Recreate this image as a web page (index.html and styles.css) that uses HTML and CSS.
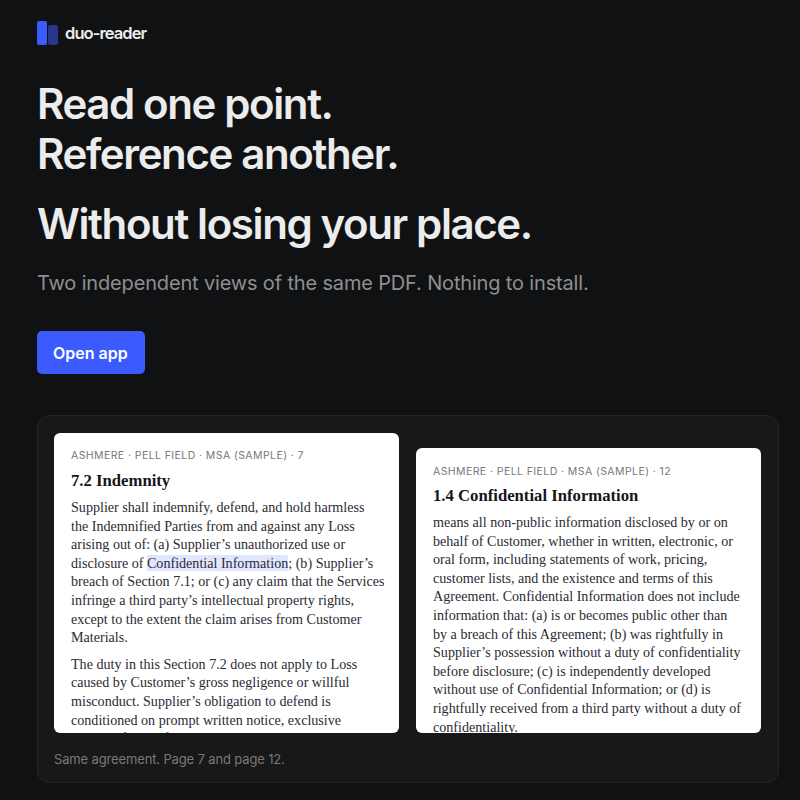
FILE: index.html
```html
<!DOCTYPE html>
<html lang="en">
<head>
<meta charset="utf-8">
<title>duo-reader</title>
<link rel="stylesheet" href="styles.css">
</head>
<body>
<main class="page">
  <header class="brand">
    <svg class="mark" width="22" height="24" viewBox="0 0 22 24" aria-hidden="true">
      <rect x="0" y="0" width="10" height="24" rx="2" fill="#3b5bff"/>
      <rect x="11" y="4" width="10" height="20" rx="2" fill="#27358a"/>
    </svg>
    <span class="brand-name">duo-reader</span>
  </header>
  <h1 class="headline">Read one point.<br>Reference another.</h1>
  <h2 class="subhead">Without losing your place.</h2>
  <p class="lede">Two independent views of the same PDF. Nothing to install.</p>
  <a class="cta" href="#">Open app</a>
  <section class="panel">
    <div class="cards">
      <article class="card">
        <div class="eyebrow">ASHMERE · PELL FIELD · MSA (SAMPLE) · 7</div>
        <h3 class="title">7.2 Indemnity</h3>
        <p class="body">Supplier shall indemnify, defend, and hold harmless<br>the Indemnified Parties from and against any Loss<br>arising out of: (a) Supplier’s unauthorized use or<br>disclosure of <mark class="hit">Confidential Information</mark>; (b) Supplier’s<br>breach of Section 7.1; or (c) any claim that the Services<br>infringe a third party’s intellectual property rights,<br>except to the extent the claim arises from Customer<br>Materials.</p>
        <p class="body">The duty in this Section 7.2 does not apply to Loss<br>caused by Customer’s gross negligence or willful<br>misconduct. Supplier’s obligation to defend is<br>conditioned on prompt written notice, exclusive<br>control of the defense, and reasonable</p>
      </article>
      <article class="card card-low">
        <div class="eyebrow">ASHMERE · PELL FIELD · MSA (SAMPLE) · 12</div>
        <h3 class="title">1.4 Confidential Information</h3>
        <p class="body">means all non-public information disclosed by or on<br>behalf of Customer, whether in written, electronic, or<br>oral form, including statements of work, pricing,<br>customer lists, and the existence and terms of this<br>Agreement. Confidential Information does not include<br>information that: (a) is or becomes public other than<br>by a breach of this Agreement; (b) was rightfully in<br>Supplier’s possession without a duty of confidentiality<br>before disclosure; (c) is independently developed<br>without use of Confidential Information; or (d) is<br>rightfully received from a third party without a duty of<br>confidentiality.</p>
      </article>
    </div>
    <p class="caption">Same agreement. Page 7 and page 12.</p>
  </section>
</main>
</body>
</html>
```
FILE: styles.css
```css
* { box-sizing: border-box; }
html, body { margin: 0; padding: 0; background: #101113; }
body { font-family: Inter, "Liberation Sans", sans-serif; color: #ececec; overflow: hidden; }
.page { width: 800px; height: 800px; padding: 21px 21px 0 37px; display: flex; flex-direction: column; align-items: flex-start; }
.brand { display: flex; align-items: center; gap: 6px; height: 24px; }
.mark { display: block; }
.brand-name { font-size: 16.5px; font-weight: 600; letter-spacing: -0.055em; color: #ececec; }
.headline { margin: 34px 0 0; font-size: 42px; line-height: 50px; font-weight: 600; letter-spacing: -0.033em; color: #ececec; }
.subhead { margin: 20px 0 0; font-size: 42px; line-height: 50px; font-weight: 600; letter-spacing: -0.033em; color: #ececec; }
.lede { margin: 20px 0 0; font-size: 20px; line-height: 28px; letter-spacing: -0.16px; color: #8e8f91; }
.cta { margin-top: 34px; height: 43px; padding: 0 17px 0 16px; display: flex; align-items: center; background: #3b5bff; color: #fff; border-radius: 5px; font-size: 16px; font-weight: 600; text-decoration: none; }
.panel { margin-top: 41px; width: 742px; height: 368px; padding: 17px 16px 0; background: #181818; border: 1px solid #242424; border-radius: 12px; }
.cards { display: flex; gap: 17px; height: 300px; }
.card { flex: 0 0 345px; padding: 16px 17px 0; background: #fff; border-radius: 6px; overflow: hidden; }
.card-low { margin-top: 15px; padding-top: 17px; }
.eyebrow { font-size: 10.5px; line-height: 13px; letter-spacing: 0.04em; color: #77787c; }
.title { margin: 8px 0 0; font-family: "Liberation Serif", serif; font-size: 16.7px; line-height: 22px; font-weight: 700; color: #15151a; }
.card-low .title { margin-top: 7px; }
.body { margin: 6px 0 0; font-family: "Liberation Serif", serif; font-size: 14.1px; line-height: 18.6px; color: #2b2b33; white-space: nowrap; }
.body + .body { margin-top: 8px; }
.hit { background: #e0e6ff; color: inherit; }
.caption { margin: 18px 0 0; font-size: 13px; line-height: 16px; letter-spacing: -0.14px; color: #77787a; }
```
